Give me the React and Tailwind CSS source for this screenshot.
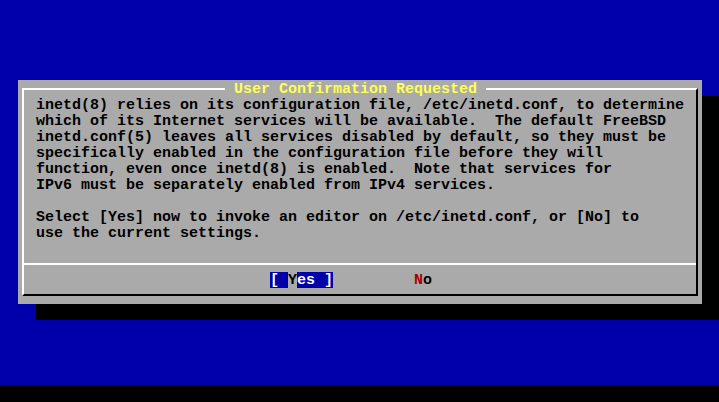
import React from 'react';

const bodyLines = [
  'inetd(8) relies on its configuration file, /etc/inetd.conf, to determine',
  'which of its Internet services will be available.  The default FreeBSD',
  'inetd.conf(5) leaves all services disabled by default, so they must be',
  'specifically enabled in the configuration file before they will',
  'function, even once inetd(8) is enabled.  Note that services for',
  'IPv6 must be separately enabled from IPv4 services.',
  '',
  'Select [Yes] now to invoke an editor on /etc/inetd.conf, or [No] to',
  'use the current settings.',
  '',
];

const App = () => {
  return (
    <div
      className="w-[719px] h-[402px] bg-black overflow-hidden text-[15px] leading-[20px] font-bold whitespace-pre"
      style={{ fontFamily: '"Liberation Mono", "DejaVu Sans Mono", monospace' }}
    >
      {/* Blue screen area */}
      <div className="h-[385px] bg-[#0000aa] pt-[80px] pl-[18px]">
        {/* Dialog */}
        <div className="w-[684px] h-[224px] bg-[#aaaaaa] shadow-[18px_16px_0_#000] flex flex-col px-[4px]">
          {/* Title row */}
          <div className="h-[16px] flex">
            <div className="w-[203px] h-[8px] self-end border-l-2 border-t-2 border-white" />
            <span className="h-[16px] px-[9px] text-[#ffff55]">User Confirmation Requested</span>
            <div className="flex-1 h-[8px] self-end border-t-2 border-t-white border-r-2 border-r-black" />
          </div>

          {/* Body */}
          <div className="h-[192px] border-l-2 border-white border-r-2 border-r-black flex flex-col">
            <div className="pl-[12px] text-black">
              {bodyLines.map((line, i) => (
                <div key={i} className="h-[16px]">{line}</div>
              ))}
            </div>

            {/* Separator */}
            <div className="h-[16px] flex items-center">
              <div className="w-full h-[2px] bg-white" />
            </div>

            {/* Buttons */}
            <div className="h-[16px] flex pl-[246px]">
              <span className="flex h-[16px]">
                <span className="bg-[#0000aa] text-white h-[16px] leading-[18px]">[ </span>
                <span className="text-black h-[16px] leading-[18px]">Y</span>
                <span className="bg-[#0000aa] text-white h-[16px] leading-[18px]">es ]</span>
              </span>
              <span className="ml-[81px] h-[16px] leading-[18px]">
                <span className="text-[#aa0000]">N</span>
                <span className="text-black">o</span>
              </span>
            </div>
          </div>

          {/* Bottom row */}
          <div className="h-[16px]">
            <div className="h-[8px] border-l-2 border-l-white border-b-2 border-b-black border-r-2 border-r-black" />
          </div>
        </div>
      </div>
    </div>
  );
};

export default App;
